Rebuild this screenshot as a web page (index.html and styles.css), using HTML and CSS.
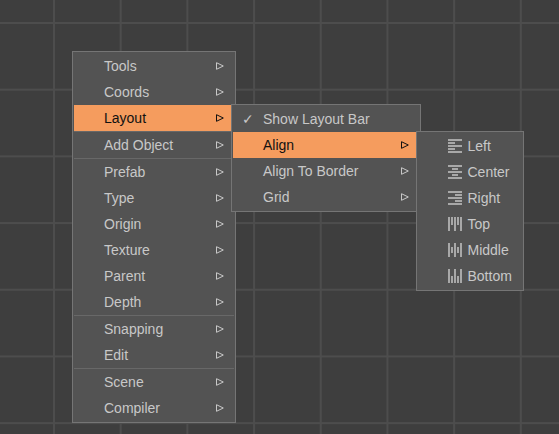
FILE: index.html
```html
<!DOCTYPE html>
<html>
	<head>
		<meta charset="utf-8">
		<title>Menu</title>
		<link rel="stylesheet" href="styles.css">
	</head>
	<body>
		<svg width="0" height="0" class="defs">
			<symbol id="arrow" viewBox="0 0 8 8"><path d="M0.5 0.7 L7.3 4 L0.5 7.3 Z" fill="none" stroke="currentColor"/></symbol>
		</svg>

		<ul class="menu menu-root">
			<li class="item"><span class="label">Tools</span><svg class="arrow"><use href="#arrow"/></svg></li>
			<li class="item"><span class="label">Coords</span><svg class="arrow"><use href="#arrow"/></svg></li>
			<li class="item active sep-after"><span class="label">Layout</span><svg class="arrow"><use href="#arrow"/></svg></li>
			<li class="item sep-after"><span class="label">Add Object</span><svg class="arrow"><use href="#arrow"/></svg></li>
			<li class="item"><span class="label">Prefab</span><svg class="arrow"><use href="#arrow"/></svg></li>
			<li class="item"><span class="label">Type</span><svg class="arrow"><use href="#arrow"/></svg></li>
			<li class="item"><span class="label">Origin</span><svg class="arrow"><use href="#arrow"/></svg></li>
			<li class="item"><span class="label">Texture</span><svg class="arrow"><use href="#arrow"/></svg></li>
			<li class="item"><span class="label">Parent</span><svg class="arrow"><use href="#arrow"/></svg></li>
			<li class="item sep-after"><span class="label">Depth</span><svg class="arrow"><use href="#arrow"/></svg></li>
			<li class="item"><span class="label">Snapping</span><svg class="arrow"><use href="#arrow"/></svg></li>
			<li class="item sep-after"><span class="label">Edit</span><svg class="arrow"><use href="#arrow"/></svg></li>
			<li class="item"><span class="label">Scene</span><svg class="arrow"><use href="#arrow"/></svg></li>
			<li class="item"><span class="label">Compiler</span><svg class="arrow"><use href="#arrow"/></svg></li>
		</ul>

		<ul class="menu menu-layout">
			<li class="item"><span class="check">✓</span><span class="label">Show Layout Bar</span></li>
			<li class="item active"><span class="label">Align</span><svg class="arrow"><use href="#arrow"/></svg></li>
			<li class="item"><span class="label">Align To Border</span><svg class="arrow"><use href="#arrow"/></svg></li>
			<li class="item"><span class="label">Grid</span><svg class="arrow"><use href="#arrow"/></svg></li>
		</ul>

		<ul class="menu menu-align">
			<li class="item"><svg class="icon" viewBox="0 0 14 14"><path d="M0 0h14v2H0zM0 3h7v2H0zM0 6h14v2H0zM0 9h7v2H0zM0 12h14v2H0z"/></svg><span class="label">Left</span></li>
			<li class="item"><svg class="icon" viewBox="0 0 14 14"><path d="M0 0h14v2H0zM4 3h6v2H4zM0 6h14v2H0zM4 9h6v2H4zM0 12h14v2H0z"/></svg><span class="label">Center</span></li>
			<li class="item"><svg class="icon" viewBox="0 0 14 14"><path d="M0 0h14v2H0zM7 3h7v2H7zM0 6h14v2H0zM7 9h7v2H7zM0 12h14v2H0z"/></svg><span class="label">Right</span></li>
			<li class="item"><svg class="icon" viewBox="0 0 14 14"><path d="M0 0h2v14H0zM3 0h2v8H3zM6 0h2v14H6zM9 0h2v8H9zM12 0h2v14h-2z"/></svg><span class="label">Top</span></li>
			<li class="item"><svg class="icon" viewBox="0 0 14 14"><path d="M0 0h2v14H0zM3 4h2v6H3zM6 0h2v14H6zM9 4h2v6H9zM12 0h2v14h-2z"/></svg><span class="label">Middle</span></li>
			<li class="item"><svg class="icon" viewBox="0 0 14 14"><path d="M0 0h2v14H0zM3 7h2v7H3zM6 0h2v14H6zM9 7h2v7H9zM12 0h2v14h-2z"/></svg><span class="label">Bottom</span></li>
		</ul>
	</body>
</html>
```

FILE: styles.css
```css
* {
	box-sizing: border-box;
}

html, body {
	margin: 0;
	height: 100%;
}

body {
	position: relative;
	overflow: hidden;
	font-family: "Liberation Sans", Arial, sans-serif;
	font-size: 14px;
	color: #c8c8c8;
	background-color: #3e3e3e;
	background-image:
		linear-gradient(to right, #4d4d4d 2px, transparent 2px),
		linear-gradient(to bottom, #4d4d4d 2px, transparent 2px);
	background-size: 66.7px 66.7px;
	background-position: 53px 22px;
}

.defs {
	position: absolute;
}

.menu {
	position: absolute;
	margin: 0;
	padding: 1px;
	list-style: none;
	background: #535353;
	border: 1px solid #757575;
}

.menu-root {
	left: 72px;
	top: 51px;
	width: 164px;
}

.menu-layout {
	left: 231px;
	top: 104px;
	width: 190px;
}

.menu-align {
	left: 416px;
	top: 131px;
	width: 108px;
}

.item {
	display: flex;
	align-items: center;
	height: 26px;
	padding-left: 30px;
	padding-right: 10px;
	position: relative;
}

.menu-align .item {
	padding-right: 0;
}

.sep-after {
	height: 27px;
	border-bottom: 1px solid #686868;
}

.active {
	background: #f59c5e;
	background-clip: padding-box;
	color: #111;
}

.label {
	flex: 1;
}

.arrow {
	flex: none;
	width: 8px;
	height: 8px;
}

.check {
	position: absolute;
	left: 9px;
}

.icon {
	flex: none;
	width: 14px;
	height: 14px;
	margin-right: 5.5px;
	fill: #a8a8a8;
}
```
